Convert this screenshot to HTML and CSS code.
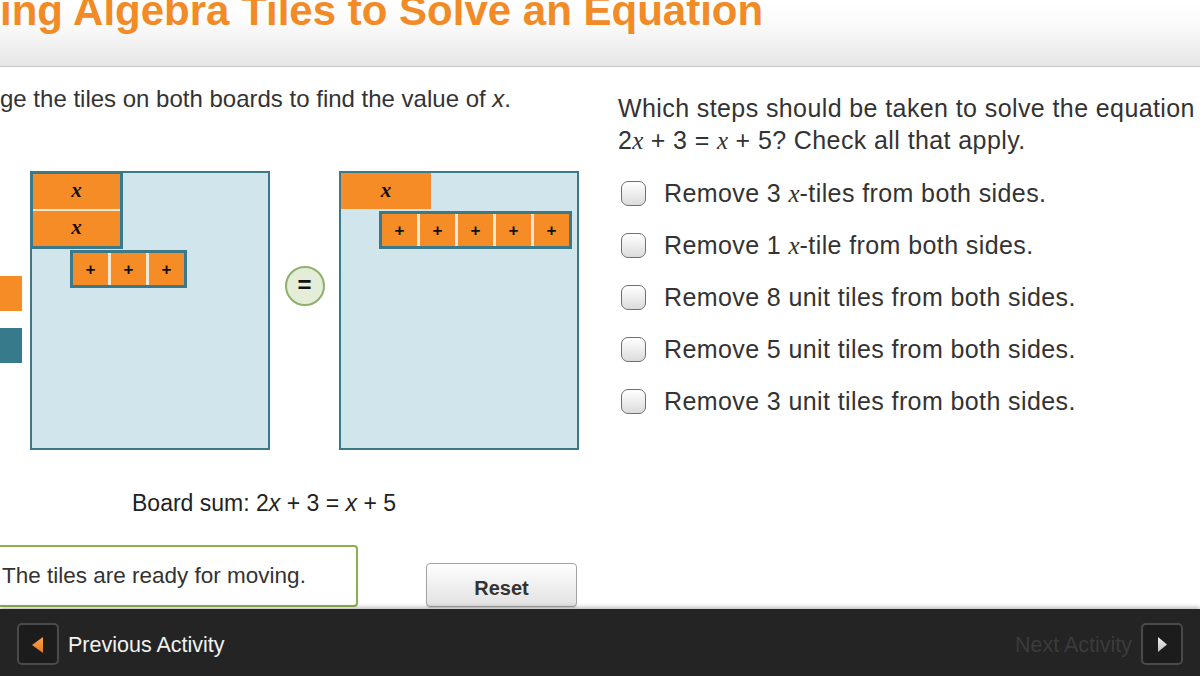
FILE: index.html
```html
<!DOCTYPE html>
<html lang="en">
<head>
<meta charset="utf-8">
<title>Using Algebra Tiles to Solve an Equation</title>
<link rel="stylesheet" href="styles.css">
</head>
<body>
<div class="app">
  <header class="topbar">
    <h1 class="title">ing Algebra Tiles to Solve an Equation</h1>
  </header>
  <main class="content">
    <section class="activity">
      <p class="instruction">ge the tiles on both boards to find the value of <i>x</i>.</p>
      <div class="workspace">
        <div class="palette">
          <div class="bin bin-unit"></div>
          <div class="bin bin-neg"></div>
        </div>
        <div class="board">
          <div class="group group-x">
            <div class="tile tile-x"><span class="xlabel">x</span></div>
            <div class="tile tile-x"><span class="xlabel">x</span></div>
          </div>
          <div class="group group-units">
            <div class="tile tile-unit">+</div>
            <div class="tile tile-unit">+</div>
            <div class="tile tile-unit">+</div>
          </div>
        </div>
        <div class="equals"><span class="equals-sign">=</span></div>
        <div class="board">
          <div class="tile tile-x solo"><span class="xlabel">x</span></div>
          <div class="group group-units">
            <div class="tile tile-unit">+</div>
            <div class="tile tile-unit">+</div>
            <div class="tile tile-unit">+</div>
            <div class="tile tile-unit">+</div>
            <div class="tile tile-unit">+</div>
          </div>
        </div>
      </div>
      <p class="board-sum">Board sum: 2<i>x</i> + 3 = <i>x</i> + 5</p>
      <div class="controls">
        <div class="status">The tiles are ready for moving.</div>
        <button class="reset" type="button">Reset</button>
      </div>
    </section>
    <section class="question">
      <p class="prompt">Which steps should be taken to solve the equation<br>2<i class="var">x</i> + 3 = <i class="var">x</i> + 5? Check all that apply.</p>
      <ul class="options">
        <li class="option"><span class="check"></span><span class="option-text">Remove 3 <i class="var">x</i>-tiles from both sides.</span></li>
        <li class="option"><span class="check"></span><span class="option-text">Remove 1 <i class="var">x</i>-tile from both sides.</span></li>
        <li class="option"><span class="check"></span><span class="option-text">Remove 8 unit tiles from both sides.</span></li>
        <li class="option"><span class="check"></span><span class="option-text">Remove 5 unit tiles from both sides.</span></li>
        <li class="option"><span class="check"></span><span class="option-text">Remove 3 unit tiles from both sides.</span></li>
      </ul>
    </section>
  </main>
  <footer class="navbar">
    <button class="nav-btn" type="button" aria-label="Previous">
      <svg width="38" height="38" viewBox="0 0 38 38">
        <defs>
          <linearGradient id="og" x1="0" y1="0" x2="0" y2="1">
            <stop offset="0" stop-color="#f9a550"/>
            <stop offset="1" stop-color="#e8791c"/>
          </linearGradient>
        </defs>
        <polygon points="24,12 13,20 24,28" fill="url(#og)"/>
      </svg>
    </button>
    <span class="nav-label">Previous Activity</span>
    <span class="spacer"></span>
    <span class="nav-label disabled">Next Activity</span>
    <button class="nav-btn" type="button" aria-label="Next">
      <svg width="38" height="38" viewBox="0 0 38 38">
        <defs>
          <linearGradient id="wg" x1="0" y1="0" x2="0" y2="1">
            <stop offset="0" stop-color="#f2f2f2"/>
            <stop offset="1" stop-color="#bdbdbd"/>
          </linearGradient>
        </defs>
        <polygon points="15,12 24,19.5 15,27" fill="url(#wg)"/>
      </svg>
    </button>
  </footer>
</div>
</body>
</html>
```

FILE: styles.css
```css
* { box-sizing: border-box; }

body {
  margin: 0;
  width: 1200px;
  height: 676px;
  overflow: hidden;
  background: #ffffff;
  font-family: "Liberation Sans", Arial, sans-serif;
  color: #333333;
}

.app {
  display: flex;
  flex-direction: column;
  height: 676px;
}

/* Header */
.topbar {
  height: 67px;
  flex: none;
  overflow: hidden;
  background: linear-gradient(#ffffff 0%, #fbfbfb 35%, #e6e6e6 100%);
  border-bottom: 1px solid #c6c6c6;
}

.title {
  margin: -10px 0 0 0;
  font-size: 42px;
  line-height: 42px;
  font-weight: bold;
  color: #f28b26;
  white-space: nowrap;
}

/* Content */
.content {
  flex: 1;
  display: flex;
  min-height: 0;
}

.activity {
  width: 618px;
  flex: none;
  padding-top: 18px;
}

.instruction {
  margin: 0;
  font-size: 24px;
  line-height: 28px;
  white-space: nowrap;
}

.workspace {
  margin-top: 58px;
  display: flex;
  align-items: flex-start;
}

.palette {
  width: 22px;
  padding-top: 105px;
  display: flex;
  flex-direction: column;
  gap: 17px;
}

.bin {
  width: 22px;
  height: 35px;
}

.bin-unit { background: #f68c25; }
.bin-neg { background: #367a8b; }

.board {
  width: 240px;
  height: 279px;
  margin-left: 8px;
  background: #d0e5ec;
  border: 2px solid #3a788a;
  display: flex;
  flex-direction: column;
  align-items: flex-start;
}

.board + .equals + .board { margin-left: 0; }

.equals {
  width: 69px;
  padding-top: 95px;
  display: flex;
  justify-content: center;
}

.equals-sign {
  width: 40px;
  height: 40px;
  border-radius: 50%;
  border: 2px solid #8fb06c;
  background: #e4edd8;
  display: flex;
  align-items: center;
  justify-content: center;
  font-size: 24px;
  font-weight: bold;
  color: #111;
  line-height: 1;
  padding-bottom: 2px;
}

.group {
  display: flex;
  border: 3px solid #3a788a;
  background: #f1e8d6;
}

.group-x {
  flex-direction: column;
  gap: 2px;
  margin: -2px 0 0 -2px;
}

.group-units {
  gap: 3px;
  margin: 1px 0 0 38px;
}

.solo + .group-units { margin-top: 2px; }

.tile {
  background: #f68c25;
  display: flex;
  align-items: center;
  justify-content: center;
  color: #111;
}

.tile-x {
  width: 87px;
  height: 35px;
}

.tile-x.solo {
  width: 90px;
  height: 36px;
}

.xlabel {
  font-family: "Liberation Serif", "Times New Roman", serif;
  font-style: italic;
  font-weight: bold;
  font-size: 21px;
  line-height: 1;
  margin-top: -2px;
}

.tile-unit {
  width: 35px;
  height: 32px;
  font-size: 17px;
  font-weight: bold;
  line-height: 1;
}

.board-sum {
  margin: 39px 0 0 0;
  padding-left: 132px;
  font-size: 23px;
  line-height: 28px;
  color: #222;
}

.controls {
  margin-top: 28px;
  display: flex;
  align-items: flex-end;
}

.status {
  margin-left: -12px;
  width: 370px;
  height: 62px;
  border: 2px solid #8cb050;
  border-radius: 4px;
  padding-left: 12px;
  display: flex;
  align-items: center;
  font-size: 22.5px;
  line-height: 26px;
  color: #333;
  background: #fff;
}

.reset {
  margin-left: 68px;
  width: 151px;
  height: 44px;
  padding: 6px 0 0 0;
  border: 1px solid #a3a3a3;
  border-radius: 4px;
  background: linear-gradient(#fefefe, #e2e2e2);
  box-shadow: 0 1px 1px rgba(0, 0, 0, 0.15);
  font-family: "Liberation Sans", Arial, sans-serif;
  font-size: 20px;
  font-weight: bold;
  color: #333;
}

/* Question */
.question {
  flex: 1;
  padding-top: 25px;
  min-width: 0;
}

.prompt {
  margin: 0;
  font-size: 25px;
  line-height: 32px;
  letter-spacing: 0.4px;
  white-space: nowrap;
  color: #333;
}

.var {
  font-family: "Liberation Serif", "Times New Roman", serif;
  font-style: italic;
  letter-spacing: 0;
}

.options {
  list-style: none;
  margin: 10px 0 0 0;
  padding: 0;
}

.option {
  height: 52px;
  display: flex;
  align-items: center;
}

.check {
  width: 25px;
  height: 25px;
  margin-left: 3px;
  border: 1.5px solid #6f6f6f;
  border-radius: 7px;
  background: linear-gradient(#ffffff, #dcdcdc);
  flex: none;
}

.option-text {
  margin-left: 18px;
  font-size: 25px;
  line-height: 52px;
  letter-spacing: 0.4px;
  white-space: nowrap;
  color: #333;
}

/* Footer */
.navbar {
  height: 67px;
  flex: none;
  background: #242424;
  box-shadow: 0 -2px 4px rgba(0, 0, 0, 0.25);
  display: flex;
  align-items: center;
  padding: 2px 17px 0 17px;
  position: relative;
}

.nav-btn {
  width: 42px;
  height: 42px;
  padding: 0;
  border: 2px solid #4a4a4a;
  border-radius: 5px;
  background: #1c1c1c;
  display: flex;
  align-items: center;
  justify-content: center;
}

.nav-btn svg { display: block; }

.nav-label {
  margin-left: 9px;
  margin-top: 4px;
  font-size: 21.5px;
  color: #f2f2f2;
  white-space: nowrap;
}

.nav-label.disabled {
  margin-left: 0;
  margin-right: 9px;
  color: #3b3b3b;
}

.spacer { flex: 1; }
```
